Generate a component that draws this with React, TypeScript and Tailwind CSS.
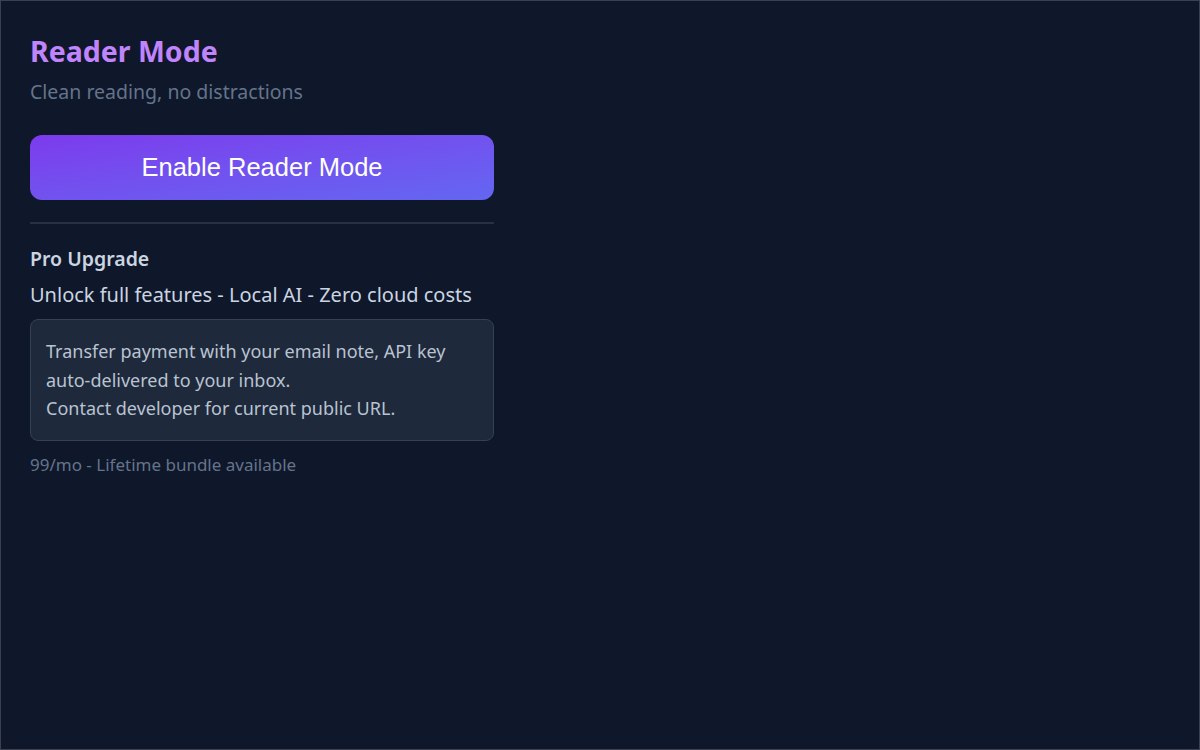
const App: React.FC = () => {
  return (
    <div
      className="h-[750px] w-[1200px] border border-[#3b4150] bg-[#0f172a]"
      style={{ fontFamily: '"Noto Sans", "Open Sans", sans-serif' }}
    >
      <div className="ml-[29px] w-[464px] pt-[30px]">
        {/* header */}
        <h1 className="text-[28.5px] leading-[40px] font-bold text-[#c084fc]">Reader Mode</h1>
        <p className="mt-[7px] text-[19.5px] leading-[28px] text-[#64748b]">Clean reading, no distractions</p>

        <button
          className="mt-[29px] flex h-[65px] w-full items-center justify-center rounded-[12px] bg-gradient-to-br from-[#7c3aed] to-[#6366f1] text-[25.5px] text-white"
          style={{ fontFamily: '"Liberation Sans", Arial, sans-serif' }}
        >
          Enable Reader Mode
        </button>

        <div className="mt-[22px] h-[2px] w-full bg-[#283142]" />

        {/* pro upgrade */}
        <h2 className="mt-[21px] text-[19.5px] leading-[28px] font-semibold text-[#cbd5e1]">Pro Upgrade</h2>
        <p className="mt-[8px] text-[20px] leading-[28px] text-[#cbd5e1]">
          Unlock full features - Local AI - Zero cloud costs
        </p>

        <div className="mt-[10px] rounded-[8px] border border-[#334155] bg-[#1e293b] px-[15px] py-[17px] text-[18px] leading-[28.5px] text-[#b9c3d1]">
          <p>Transfer payment with your email note, API key auto-delivered to your inbox.</p>
          <p>Contact developer for current public URL.</p>
        </div>

        <p className="mt-[12px] text-[17px] leading-[24px] text-[#64748b]">99/mo - Lifetime bundle available</p>
      </div>
    </div>
  );
};

export default App;
